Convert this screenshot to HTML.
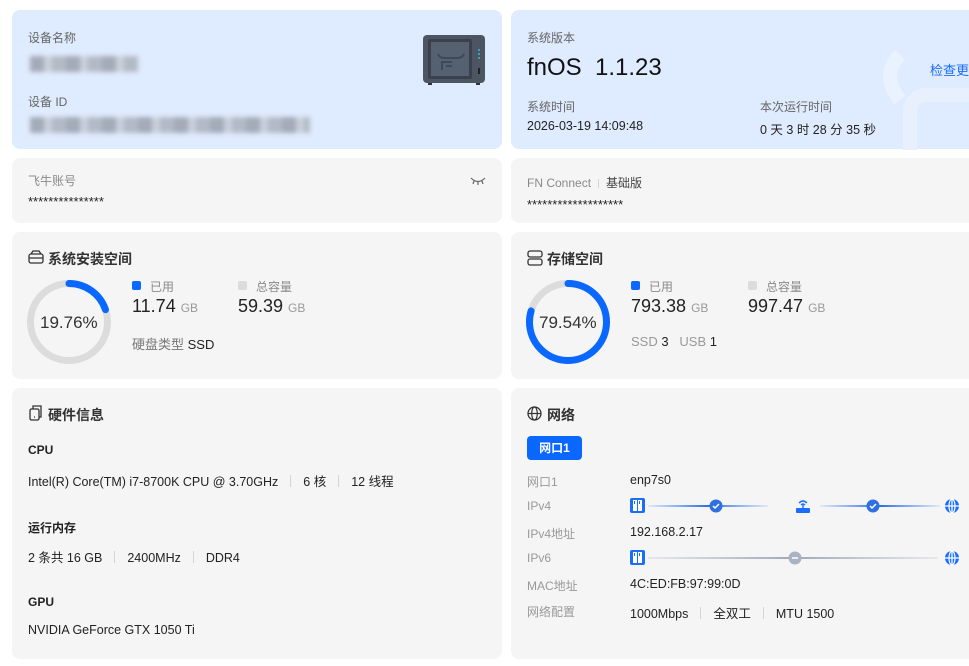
<!DOCTYPE html>
<html><head><meta charset="utf-8"><style>
*{margin:0;padding:0;box-sizing:border-box}
body{width:969px;height:666px;background:#fff;position:relative;overflow:hidden;font-family:"Liberation Sans","Noto Sans CJK SC",sans-serif;color:#222}
.c{position:absolute;border-radius:8px;background:#f5f5f5;overflow:hidden}
.b{background:#dfebfe}
.t{position:absolute;white-space:nowrap}
.g{color:#8a8a8a;font-size:12px}
.d{color:#222;font-size:12.5px}
.h{font-size:14px;font-weight:bold;color:#333}
.blur{position:absolute;background:repeating-linear-gradient(90deg,#8f96a2 0 14px,#c2c7d0 14px 22px,#a5aab4 22px 36px);filter:blur(2.5px);opacity:.75}
.sep{display:inline-block;width:1px;height:12px;background:#d5d5d5;margin:0 12px;vertical-align:-1px}
</style></head><body>

<div class="c b" style="left:12px;top:10px;width:490px;height:139px"></div>
<div class="t g" style="left:28px;top:29px;color:#666">设备名称</div>
<div class="blur" style="left:30px;top:56px;width:108px;height:16px"></div>
<div class="t g" style="left:28px;top:93px;color:#666">设备 ID</div>
<div class="blur" style="left:30px;top:117px;width:280px;height:16px"></div>
<svg class="t" style="left:422px;top:34px" width="64" height="52" viewBox="0 0 64 52"><rect x="1" y="1" width="62" height="48" rx="4" fill="#4d5563"/><rect x="6" y="5" width="44" height="40" rx="2" fill="#3a414d"/><rect x="9" y="8" width="38" height="34" fill="#556070"/><path d="M16 20q2 4 6 4h14q4 0 6-4M20 36v-8h10M24 32h6" stroke="#3f4855" stroke-width="2" fill="none"/><circle cx="57" cy="16" r="1" fill="#29c1d6"/><circle cx="57" cy="20" r="1" fill="#29c1d6"/><circle cx="57" cy="24" r="1" fill="#29c1d6"/><rect x="56" y="34" width="2" height="6" fill="#222"/><rect x="6" y="49" width="4" height="2" fill="#333"/><rect x="54" y="49" width="4" height="2" fill="#333"/></svg>

<div class="c b" style="left:511px;top:10px;width:470px;height:139px"></div>
<svg class="t" style="left:870px;top:40px" width="99" height="110"><path d="M30 15q-20 20 0 45" stroke="#eaf2ff" stroke-width="14" fill="none"/><rect x="40" y="55" width="80" height="70" rx="16" stroke="#e8f0fe" stroke-width="14" fill="none"/></svg>
<div class="t g" style="left:527px;top:29px;color:#666">系统版本</div>
<div class="t" style="left:527px;top:54px;font-size:24px;color:#111">fnOS&nbsp; 1.1.23</div>
<div class="t" style="left:930px;top:60px;font-size:13px;color:#1a6dff">检查更新</div>
<div class="t g" style="left:527px;top:98px;color:#666">系统时间</div>
<div class="t d" style="left:527px;top:119px">2026-03-19 14:09:48</div>
<div class="t g" style="left:760px;top:98px;color:#666">本次运行时间</div>
<div class="t d" style="left:760px;top:119px">0 天 3 时 28 分 35 秒</div>

<div class="c" style="left:12px;top:158px;width:490px;height:65px"></div>
<div class="t g" style="left:28px;top:172px">飞牛账号</div>
<div class="t d" style="left:28px;top:194px;font-size:13px">***************</div>
<svg class="t" style="left:470px;top:176px" width="16" height="10"><path d="M1 2q7 7 14 0M4 5l-1 3M8 6v3M12 5l1 3" stroke="#666" stroke-width="1.2" fill="none"/></svg>

<div class="c" style="left:511px;top:158px;width:470px;height:65px"></div>
<div class="t g" style="left:527px;top:174px">FN Connect<span class="sep" style="height:9px;margin:0 7px"></span><span style="color:#444">基础版</span></div>
<div class="t d" style="left:527px;top:197px;font-size:13px">*******************</div>

<div class="c" style="left:12px;top:232px;width:490px;height:147px"></div>
<svg class="t" style="left:28px;top:250px" width="16" height="14"><rect x="1" y="4" width="14" height="9" rx="2" stroke="#333" stroke-width="1.3" fill="none"/><path d="M3 4l2-3h6l2 3M1 8h14" stroke="#333" stroke-width="1.3" fill="none"/></svg>
<div class="t h" style="left:48px;top:249px">系统安装空间</div>
<svg class="t" style="left:27px;top:280px" width="84" height="84"><circle cx="42" cy="42" r="38.5" stroke="#dcdcdc" stroke-width="7" fill="none"/><circle cx="42" cy="42" r="38.5" stroke="#0a67ff" stroke-width="7" fill="none" stroke-dasharray="47.8 300" transform="rotate(-90 42 42)" stroke-linecap="round"/></svg>
<div class="t" style="left:40px;top:313px;font-size:17px;color:#333;font-weight:500">19.76%</div>
<div class="t" style="left:132px;top:281px;width:9px;height:9px;background:#0a67ff;border-radius:2px"></div>
<div class="t g" style="left:150px;top:278px">已用</div>
<div class="t" style="left:132px;top:296px;font-size:18px">11.74 <span style="font-size:12px;color:#999">GB</span></div>
<div class="t" style="left:238px;top:281px;width:9px;height:9px;background:#dcdcdc;border-radius:2px"></div>
<div class="t g" style="left:256px;top:278px">总容量</div>
<div class="t" style="left:238px;top:296px;font-size:18px">59.39 <span style="font-size:12px;color:#999">GB</span></div>
<div class="t" style="left:132px;top:334px;font-size:13px;color:#777">硬盘类型 <span style="color:#222">SSD</span></div>

<div class="c" style="left:511px;top:232px;width:470px;height:147px"></div>
<svg class="t" style="left:527px;top:250px" width="16" height="16"><rect x="1" y="1" width="14" height="6" rx="2" stroke="#333" stroke-width="1.3" fill="none"/><rect x="1" y="9" width="14" height="6" rx="2" stroke="#333" stroke-width="1.3" fill="none"/></svg>
<div class="t h" style="left:547px;top:249px">存储空间</div>
<svg class="t" style="left:526px;top:280px" width="84" height="84"><circle cx="42" cy="42" r="38.5" stroke="#dcdcdc" stroke-width="7" fill="none"/><circle cx="42" cy="42" r="38.5" stroke="#0a67ff" stroke-width="7" fill="none" stroke-dasharray="192.4 300" transform="rotate(-90 42 42)" stroke-linecap="round"/></svg>
<div class="t" style="left:539px;top:313px;font-size:17px;color:#333">79.54%</div>
<div class="t" style="left:631px;top:281px;width:9px;height:9px;background:#0a67ff;border-radius:2px"></div>
<div class="t g" style="left:649px;top:278px">已用</div>
<div class="t" style="left:631px;top:296px;font-size:18px">793.38 <span style="font-size:12px;color:#999">GB</span></div>
<div class="t" style="left:748px;top:281px;width:9px;height:9px;background:#dcdcdc;border-radius:2px"></div>
<div class="t g" style="left:766px;top:278px">总容量</div>
<div class="t" style="left:748px;top:296px;font-size:18px">997.47 <span style="font-size:12px;color:#999">GB</span></div>
<div class="t" style="left:631px;top:334px;font-size:13px;color:#999">SSD <span style="color:#222">3</span>&nbsp;&nbsp; USB <span style="color:#222">1</span></div>

<div class="c" style="left:12px;top:388px;width:490px;height:271px"></div>
<svg class="t" style="left:28px;top:405px" width="16" height="16"><rect x="2" y="4" width="9" height="11" rx="1.5" stroke="#333" stroke-width="1.3" fill="none"/><path d="M5 4V1h8v11h-2M6 12h1" stroke="#333" stroke-width="1.3" fill="none"/></svg>
<div class="t h" style="left:48px;top:405px">硬件信息</div>
<div class="t" style="left:28px;top:443px;font-size:12px;font-weight:bold">CPU</div>
<div class="t d" style="left:28px;top:471px">Intel(R) Core(TM) i7-8700K CPU @ 3.70GHz<span class="sep"></span>6 核<span class="sep"></span>12 线程</div>
<div class="t" style="left:28px;top:519px;font-size:12px;font-weight:bold">运行内存</div>
<div class="t d" style="left:28px;top:547px">2 条共 16 GB<span class="sep"></span>2400MHz<span class="sep"></span>DDR4</div>
<div class="t" style="left:28px;top:595px;font-size:12px;font-weight:bold">GPU</div>
<div class="t d" style="left:28px;top:623px">NVIDIA GeForce GTX 1050 Ti</div>

<div class="c" style="left:511px;top:388px;width:470px;height:271px"></div>
<svg class="t" style="left:527px;top:406px" width="15" height="15"><circle cx="7.5" cy="7.5" r="6.5" stroke="#333" stroke-width="1.3" fill="none"/><ellipse cx="7.5" cy="7.5" rx="2.8" ry="6.5" stroke="#333" stroke-width="1.2" fill="none"/><path d="M1 7.5h13" stroke="#333" stroke-width="1.2"/></svg>
<div class="t h" style="left:547px;top:405px">网络</div>
<div class="t" style="left:527px;top:436px;width:55px;height:24px;background:#0a67ff;border-radius:4px;color:#fff;font-size:12px;font-weight:bold;text-align:center;line-height:24px">网口1</div>
<div class="t g" style="left:527px;top:473px;color:#999">网口1</div><div class="t d" style="left:630px;top:473px">enp7s0</div>
<div class="t g" style="left:527px;top:499px;color:#999">IPv4</div>
<div class="t g" style="left:527px;top:525px;color:#999">IPv4地址</div><div class="t d" style="left:630px;top:525px">192.168.2.17</div>
<div class="t g" style="left:527px;top:551px;color:#999">IPv6</div>
<div class="t g" style="left:527px;top:577px;color:#999">MAC地址</div><div class="t d" style="left:630px;top:577px">4C:ED:FB:97:99:0D</div>
<div class="t g" style="left:527px;top:603px;color:#999">网络配置</div><div class="t d" style="left:630px;top:603px">1000Mbps<span class="sep"></span>全双工<span class="sep"></span>MTU 1500</div>
<svg class="t" style="left:628px;top:495px" width="334" height="70">
<defs><linearGradient id="a" x1="0" x2="1"><stop offset="0" stop-color="#2f7bff" stop-opacity=".1"/><stop offset=".5" stop-color="#2f6fe0"/><stop offset="1" stop-color="#2f7bff" stop-opacity=".1"/></linearGradient>
<linearGradient id="c" x1="0" x2="1"><stop offset="0" stop-color="#a8b0c0" stop-opacity=".2"/><stop offset=".5" stop-color="#a0a8b8"/><stop offset="1" stop-color="#a8b0c0" stop-opacity=".2"/></linearGradient>
<g id="s"><rect x="2" y="3" width="15" height="15" rx="2" fill="#1a6dff"/><rect x="5" y="5" width="4" height="11" fill="#fff"/><rect x="10" y="5" width="4" height="11" fill="#fff"/><rect x="6" y="6" width="1" height="3" fill="#1a6dff"/><rect x="11" y="6" width="1" height="3" fill="#1a6dff"/></g>
<g id="w"><circle cx="0" cy="0" r="7" fill="#1a6dff"/><path d="M0-7v14M-7 0h14" stroke="#fff" stroke-width="1.3"/><ellipse rx="3" ry="7" stroke="#fff" stroke-width="1.2" fill="none"/></g></defs>
<use href="#s"/>
<rect x="20" y="10" width="120" height="2" fill="url(#a)"/>
<circle cx="88" cy="11" r="6.5" fill="#2f6fe0"/><path d="M85 11l2 2 4-4" stroke="#fff" stroke-width="1.5" fill="none"/>
<g transform="translate(168,4)"><rect x="0" y="9" width="14" height="5" rx="1" fill="#1a6dff"/><path d="M3 4q4-4 8 0M5 6q2-2 4 0" stroke="#1a6dff" stroke-width="1.4" fill="none"/><path d="M7 6v3" stroke="#1a6dff" stroke-width="1.4"/></g>
<rect x="192" y="10" width="120" height="2" fill="url(#a)"/>
<circle cx="245" cy="11" r="6.5" fill="#2f6fe0"/><path d="M242 11l2 2 4-4" stroke="#fff" stroke-width="1.5" fill="none"/>
<use href="#w" x="324" y="11"/>
<use href="#s" y="52"/>
<rect x="20" y="62" width="290" height="2" fill="url(#c)"/>
<circle cx="167" cy="63" r="6.5" fill="#aab3c3"/><path d="M164 63h6" stroke="#fff" stroke-width="1.5"/>
<use href="#w" x="324" y="63"/>
</svg>
</body></html>
